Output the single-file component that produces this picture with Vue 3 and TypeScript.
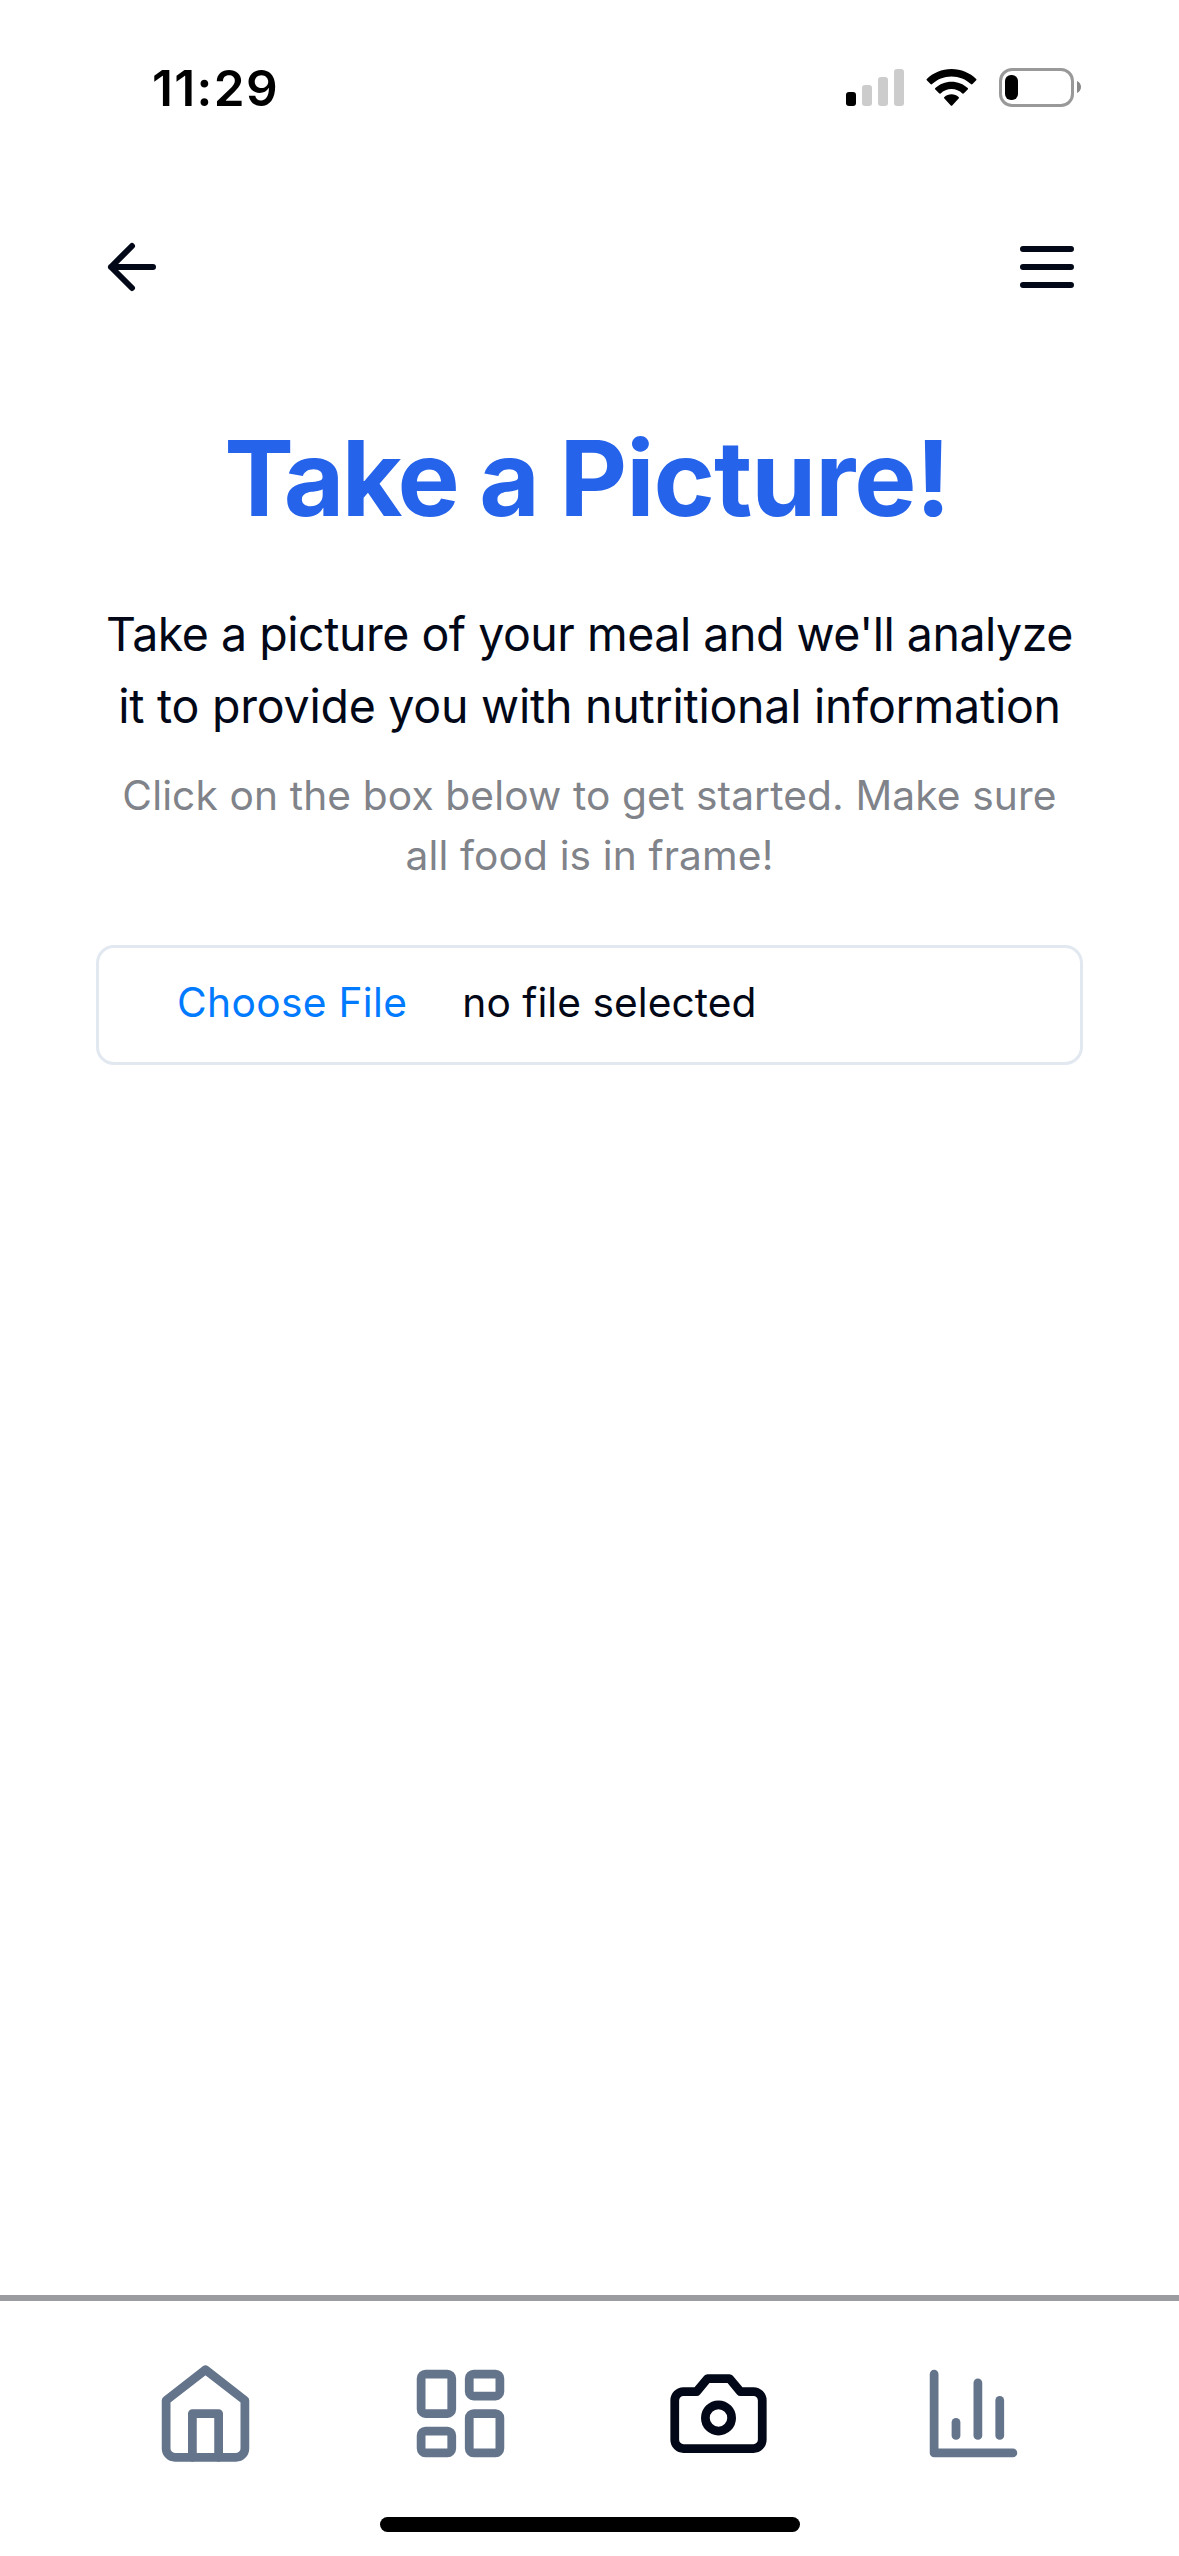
<script setup lang="ts">
interface NavItem {
  name: string
  active: boolean
  paths: string[]
}

const signalBars = [
  { height: 14, on: true },
  { height: 21, on: false },
  { height: 29, on: false },
  { height: 37, on: false },
]

const navItems: NavItem[] = [
  {
    name: 'Home',
    active: false,
    paths: ['M3 9l9-7 9 7v11a2 2 0 0 1-2 2H5a2 2 0 0 1-2-2z', 'M9 22V12h6v10'],
  },
  {
    name: 'Dashboard',
    active: false,
    paths: [
      'M4 3h5a1 1 0 0 1 1 1v7a1 1 0 0 1-1 1H4a1 1 0 0 1-1-1V4a1 1 0 0 1 1-1z',
      'M15 3h5a1 1 0 0 1 1 1v3a1 1 0 0 1-1 1h-5a1 1 0 0 1-1-1V4a1 1 0 0 1 1-1z',
      'M15 12h5a1 1 0 0 1 1 1v7a1 1 0 0 1-1 1h-5a1 1 0 0 1-1-1v-7a1 1 0 0 1 1-1z',
      'M4 16h5a1 1 0 0 1 1 1v3a1 1 0 0 1-1 1H4a1 1 0 0 1-1-1v-3a1 1 0 0 1 1-1z',
    ],
  },
  {
    name: 'Camera',
    active: true,
    paths: [
      'M14.5 4h-5L7 7H4a2 2 0 0 0-2 2v9a2 2 0 0 0 2 2h16a2 2 0 0 0 2-2V9a2 2 0 0 0-2-2h-3l-2.500-3z',
      'M15 13a3 3 0 1 1-6 0 3 3 0 0 1 6 0z',
    ],
  },
  {
    name: 'Statistics',
    active: false,
    paths: ['M3 3v18h18', 'M18 17V9', 'M13 17V5', 'M8 17v-3'],
  },
]
</script>

<template>
  <div class="screen">
    <header class="status">
      <span class="time">11:29</span>
      <div class="signal">
        <i v-for="bar in signalBars" :key="bar.height" :class="{ on: bar.on }" :style="{ height: bar.height + 'px' }"></i>
      </div>
      <svg class="wifi" viewBox="0 0 50 37">
        <path d="M25 0C34.700 0 43.500 3.900 49.700 9.900q.7.700 0 1.400l-3.700 3.700q-.8.800-1.600 0C39.400 10.200 32.500 7.400 25 7.400S10.600 10.200 5.600 15q-.8.800-1.600 0L.3 11.300q-.7-.7 0-1.400C6.500 3.900 15.300 0 25 0z" />
        <path d="M25 12.700c6.200 0 11.900 2.400 16.200 6.300q.8.800 0 1.600l-3.800 3.700q-.7.700-1.500.1C33 21.700 29.200 20.100 25 20.100s-8 1.600-10.900 4.300q-.8.600-1.500-.1l-3.800-3.700q-.8-.8 0-1.600c4.300-3.900 10-6.300 16.200-6.300z" />
        <path d="M25 25.300c2.700 0 5.200 1 7.100 2.700q.8.800 0 1.600l-6.400 6.900q-.7.700-1.400 0l-6.400-6.900q-.8-.8 0-1.600c1.900-1.700 4.400-2.700 7.100-2.700z" />
      </svg>
      <div class="battery"><i></i></div>
      <svg class="nub" viewBox="0 0 4 12"><path d="M0 0c2.300 1 4 3.300 4 6s-1.700 5-4 6z" /></svg>
    </header>

    <nav class="topbar">
      <svg class="icon" viewBox="0 0 24 24"><path d="M12 19l-7-7 7-7M19 12H5" /></svg>
      <svg class="icon" viewBox="0 0 24 24"><path d="M4 12h16M4 6h16M4 18h16" /></svg>
    </nav>

    <main>
      <h1>Take a <span class="wide">Picture!</span></h1>
      <p class="lead">
        <span class="lead-first">Take a picture of your meal and we'll analyze</span>
        <span class="lead-second">it to provide you with nutritional information</span>
      </p>
      <p class="hint">
        <span>Click on the box below to get started. Make sure</span>
        <span>all food is in frame!</span>
      </p>
      <div class="file">
        <span class="choose">Choose File</span>
        <span class="chosen">no file selected</span>
      </div>
    </main>

    <footer>
      <div class="tabs">
        <a v-for="item in navItems" :key="item.name" :class="{ active: item.active }" :aria-label="item.name">
          <svg class="icon" viewBox="0 0 24 24"><path v-for="d in item.paths" :key="d" :d="d" /></svg>
        </a>
      </div>
      <div class="indicator"></div>
    </footer>
  </div>
</template>

<style>
body {
  margin: 0;
  background: #fff;
}
</style>

<style scoped>
.screen {
  box-sizing: border-box;
  width: 1179px;
  height: 2556px;
  display: flex;
  flex-direction: column;
  overflow: hidden;
  background: #fff;
  color: #020817;
  font-family: Inter, 'Liberation Sans', sans-serif;
}
svg {
  display: block;
  flex: none;
}
.icon {
  fill: none;
  stroke: currentColor;
  stroke-width: 2;
  stroke-linecap: round;
  stroke-linejoin: round;
}

.status {
  box-sizing: border-box;
  flex: none;
  display: flex;
  align-items: flex-start;
  height: 231px;
  padding: 58px 98px 0 152px;
  color: #000;
}
.time {
  margin-right: auto;
  font-size: 49.5px;
  font-weight: 600;
  line-height: 60px;
  letter-spacing: 1.37px;
}
.signal {
  display: flex;
  align-items: flex-end;
  gap: 6px;
  height: 37px;
  margin: 11px 22px 0 0;
}
.signal i {
  width: 10px;
  border-radius: 3px;
  background: #ccc;
}
.signal i.on {
  background: #000;
}
.wifi {
  width: 51px;
  height: 37px;
  margin: 11px 22px 0 0;
}
.battery {
  box-sizing: border-box;
  width: 75px;
  height: 39px;
  margin: 10px 3px 0 0;
  padding: 4px 3px;
  border: 3px solid #999;
  border-radius: 13px;
}
.battery i {
  display: block;
  width: 13px;
  height: 25px;
  border-radius: 6px;
  background: #000;
}
.nub {
  width: 4px;
  height: 12px;
  margin-top: 23px;
  fill: #888;
}

.topbar {
  flex: none;
  display: flex;
  justify-content: space-between;
  padding: 0 96px;
}
.topbar .icon {
  width: 72px;
  height: 72px;
}

main {
  flex: 1;
  padding: 115px 96px 0;
  text-align: center;
}
h1 {
  margin: 0 0 60px;
  padding-right: 5px;
  color: #2563eb;
  font-size: 104.5px;
  font-weight: 700;
  line-height: 120px;
  letter-spacing: -2.6px;
  white-space: nowrap;
}
.wide {
  letter-spacing: -1px;
}
p {
  margin: 0;
  white-space: nowrap;
}
p span {
  display: block;
}
.lead {
  margin-bottom: 24px;
  font-size: 46.5px;
  line-height: 72px;
}
.lead-first {
  letter-spacing: -0.48px;
}
.lead-second {
  letter-spacing: -0.24px;
}
.hint {
  margin-bottom: 59px;
  color: #808389;
  font-size: 40.7px;
  line-height: 60px;
  letter-spacing: 0.12px;
}
.file {
  box-sizing: border-box;
  display: flex;
  height: 120px;
  padding: 25px 0 0 78px;
  border: 3px solid #e2e8f0;
  border-radius: 18px;
  font-size: 40.7px;
  line-height: 60px;
  white-space: nowrap;
}
.choose {
  margin-right: 55px;
  color: #007aff;
  letter-spacing: 0.33px;
}
.chosen {
  letter-spacing: 0.05px;
}

footer {
  box-sizing: border-box;
  flex: none;
  height: 261px;
  border-top: 6px solid #9b9ca0;
}
.tabs {
  display: grid;
  grid-template-columns: 255px 255px 261px 249px;
  padding: 60px 78px 51px;
}
.tabs a {
  display: flex;
  justify-content: center;
  color: #64748b;
}
.tabs a:last-child {
  justify-content: flex-start;
  padding-left: 72px;
}
.tabs a.active {
  color: #020817;
}
.tabs .icon {
  width: 105px;
  height: 105px;
}
.indicator {
  width: 420px;
  height: 15px;
  margin: 0 auto;
  border-radius: 8px;
  background: #000;
}
</style>
